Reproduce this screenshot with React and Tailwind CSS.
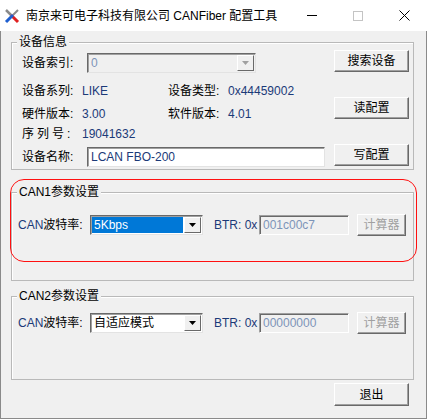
import React from 'react'

const font = "font-['Liberation_Sans','Noto_Sans_CJK_SC',sans-serif]"

function Btn({ children, disabled, className = '' }) {
  return (
    <div className={`flex items-center justify-center h-[22px] bg-[#f0f0f0] border border-t-white border-l-white border-r-[#696969] border-b-[#696969] shadow-[inset_-1px_-1px_0_#a0a0a0] text-[12px] leading-none ${disabled ? 'text-[#a0a0a0]' : 'text-black'} ${className}`}>
      {children}
    </div>
  )
}

function Arrow({ color = '#000' }) {
  return (
    <svg width="7" height="4" viewBox="0 0 7 4"><path d="M0 0h7L3.5 4z" fill={color} /></svg>
  )
}

function DropBtn({ disabled }) {
  return (
    <div className="flex items-center justify-center w-[17px] h-full bg-[#f0f0f0] border border-t-white border-l-white border-r-[#696969] border-b-[#696969]">
      <Arrow color={disabled ? '#a0a0a0' : '#000'} />
    </div>
  )
}

function Combo({ value, selected, disabled, className = '' }) {
  return (
    <div className={`flex h-[20px] border border-t-[#696969] border-l-[#696969] border-r-[#e3e3e3] border-b-[#e3e3e3] shadow-[inset_1px_1px_0_#a0a0a0] p-[1px] ${disabled ? 'bg-[#f0f0f0]' : 'bg-white'} ${className}`}>
      <div className={`flex-1 flex items-center pl-[2px] text-[12px] leading-none ${selected ? 'bg-[#0078d7] text-white mr-[1px]' : disabled ? 'text-[#7d94b8]' : 'text-black'}`}>{value}</div>
      <DropBtn disabled={disabled} />
    </div>
  )
}

function Group({ title, className = '', children }) {
  return (
    <div className={`relative ml-[10px] w-[403px] border border-[#b9b9b9] shadow-[inset_1px_1px_0_#fff] ${className}`}>
      <span className="absolute -top-[9px] left-[5px] bg-[#f0f0f0] px-[2px] text-[12px] leading-[16px] text-black">{title}</span>
      {children}
    </div>
  )
}

function CanRow({ value, selected, btr }) {
  return (
    <div className="flex items-center h-[22px]">
      <span className="w-[78px] pl-[6px] text-[12px] text-black"><span className="text-[#1b3a78]">CAN</span>波特率:</span>
      <Combo value={value} selected={selected} className="w-[113px]" />
      <span className="ml-[11px] w-[45px] text-[12px] text-[#1b3a78]">BTR: 0x</span>
      <div className="flex items-center w-[90px] h-[20px] pl-[3px] bg-[#f0f0f0] border border-t-[#a0a0a0] border-l-[#a0a0a0] border-r-white border-b-white shadow-[inset_1px_1px_0_#696969] text-[12px] text-[#7d94b8]">{btr}</div>
      <Btn disabled className="ml-[8px] w-[49px]">计算器</Btn>
    </div>
  )
}

export default function App() {
  return (
    <div className={`w-[427px] h-[419px] bg-white flex flex-col ${font}`}>
      <div className="h-[31px] flex items-center shrink-0">
        <svg className="ml-[4px]" width="16" height="16" viewBox="0 0 16 16">
          <path d="M2 2l5 5" stroke="#8a8a8a" strokeWidth="2.5" />
          <path d="M7 7l7 7" stroke="#e02020" strokeWidth="3" />
          <path d="M14 2l-5 5" stroke="#8a8a8a" strokeWidth="2" />
          <path d="M9 7l-7 7" stroke="#1e5fd0" strokeWidth="3" />
        </svg>
        <span className="ml-[6px] text-[12px] leading-none text-black">南京来可电子科技有限公司 CANFiber 配置工具</span>
        <div className="ml-auto flex items-center h-full">
          <div className="w-[46px] h-full flex items-center justify-center"><div className="w-[10px] h-px bg-black" /></div>
          <div className="w-[46px] h-full flex items-center justify-center"><div className="w-[10px] h-[10px] border border-[#c4c4c4]" /></div>
          <div className="w-[46px] h-full flex items-center justify-center">
            <svg width="11" height="11" viewBox="0 0 11 11"><path d="M0.5 0.5l10 10M10.5 0.5l-10 10" stroke="#000" strokeWidth="1" /></svg>
          </div>
        </div>
      </div>

      <div className="relative flex-1 bg-[#f0f0f0] border-x border-b border-[#8a8a8a] pt-[11px] text-[12px] leading-none text-black">
        <Group title="设备信息" className="h-[128px] flex">
          <div className="flex flex-col pl-[10px] pt-[10px] w-[322px]">
            <div className="flex items-center h-[20px]">
              <span className="w-[65px]">设备索引:</span>
              <Combo value="0" disabled className="w-[169px]" />
            </div>
            <div className="flex items-center h-[20px] mt-[8px]">
              <span className="w-[60px]">设备系列:</span>
              <span className="w-[86px] text-[#1b3a78]">LIKE</span>
              <span className="w-[60px]">设备类型:</span>
              <span className="text-[#1b3a78]">0x44459002</span>
            </div>
            <div className="flex items-center h-[20px] mt-[3px]">
              <span className="w-[60px]">硬件版本:</span>
              <span className="w-[86px] text-[#1b3a78]">3.00</span>
              <span className="w-[60px]">软件版本:</span>
              <span className="text-[#1b3a78]">4.01</span>
            </div>
            <div className="flex items-center h-[19px]">
              <span className="w-[60px] tracking-[3px]">序列号:</span>
              <span className="text-[#1b3a78]">19041632</span>
            </div>
            <div className="flex items-center h-[20px] mt-[4px]">
              <span className="w-[65px]">设备名称:</span>
              <div className="flex items-center w-[238px] h-[20px] pl-[3px] bg-white border border-t-[#696969] border-l-[#696969] border-r-[#e3e3e3] border-b-[#e3e3e3] shadow-[inset_1px_1px_0_#a0a0a0] text-[#1b3a78]">LCAN FBO-200</div>
            </div>
          </div>
          <div className="flex flex-col pt-[7px] gap-[25px]">
            <Btn className="w-[75px]">搜索设备</Btn>
            <Btn className="w-[75px]">读配置</Btn>
            <Btn className="w-[75px]">写配置</Btn>
          </div>
        </Group>

        <Group title="CAN1参数设置" className="mt-[22px] h-[89px] pt-[21px]">
          <CanRow value="5Kbps" selected btr="001c00c7" />
        </Group>
        <div className="absolute left-[9px] top-[148px] w-[407px] h-[83px] rounded-[14px] border border-[#ff1010]" />

        <Group title="CAN2参数设置" className="mt-[15px] h-[84px] pt-[15px]">
          <CanRow value="自适应模式" btr="00000000" />
        </Group>

        <div className="flex justify-end pr-[17px] mt-[3px]">
          <Btn className="w-[75px] h-[23px]">退出</Btn>
        </div>
      </div>
    </div>
  )
}
